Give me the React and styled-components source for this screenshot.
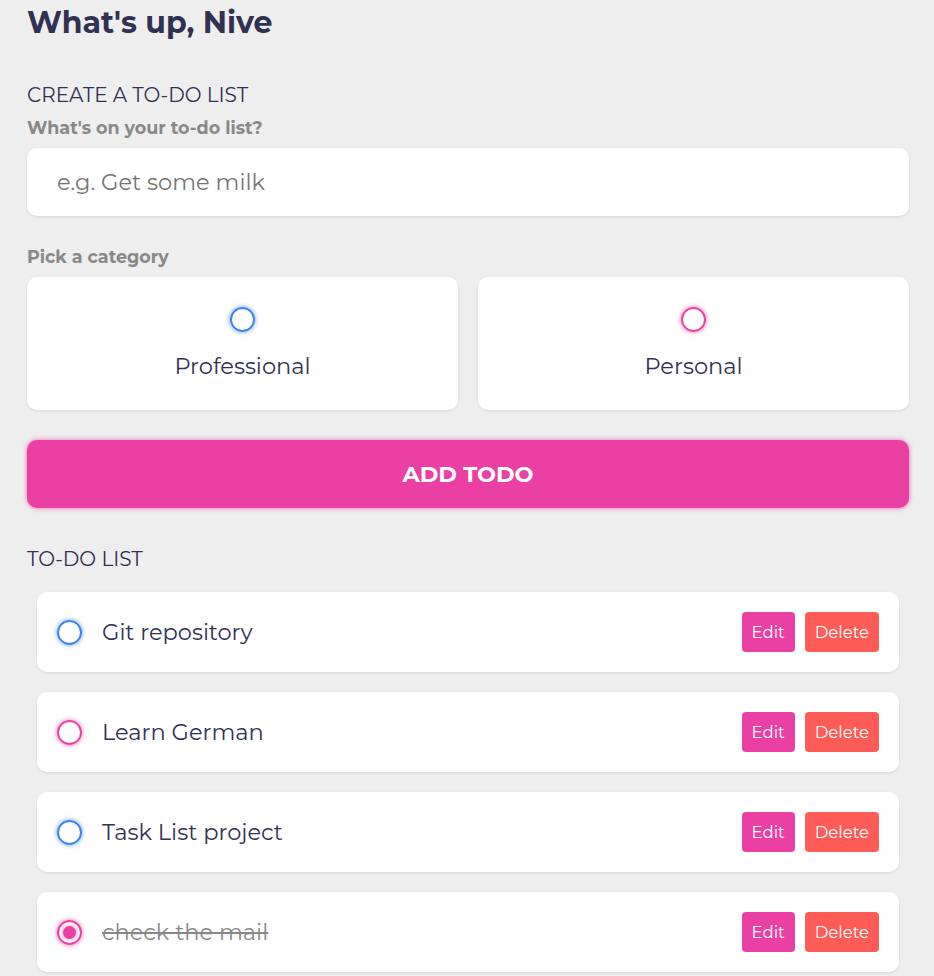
import React, {useState} from 'react';
import styled, {createGlobalStyle} from 'styled-components';

const GlobalStyle = createGlobalStyle`
  * {
    box-sizing: border-box;
    margin: 0;
    padding: 0;
  }

  body {
    background-color: #eeeeee;
    font-family: "Montserrat", "Inter", "DejaVu Sans", sans-serif;
    color: #313154;
  }
`

const StyledApp = styled.main`
  padding: 5px 25px 20px 27px;
`

const Greeting = styled.h2`
  font-size: 30px;
  font-weight: 700;
  line-height: 36px;
  color: #313154;
`

const Section = styled.section`
  margin-top: ${props => props.$top || 40}px;
`

const SectionTitle = styled.h3`
  font-size: 20px;
  font-weight: 400;
  line-height: 24px;
  color: #313154;
  margin-bottom: ${props => props.$gap || 10}px;
`

const Label = styled.h4`
  font-size: 17.5px;
  font-weight: 700;
  line-height: 21px;
  color: #888888;
  margin-bottom: 10px;
`

const TextInput = styled.input`
  display: block;
  width: 100%;
  height: 68px;
  padding: 0 30px;
  font-family: inherit;
  font-size: 22.5px;
  color: #313154;
  background-color: #ffffff;
  border: none;
  border-radius: 10px;
  box-shadow: 0 1px 3px rgba(0, 0, 0, 0.1);
  margin-bottom: 30px;
  outline: none;

  &::placeholder {
    color: #757575;
  }
`

const Options = styled.div`
  display: grid;
  grid-template-columns: repeat(2, 1fr);
  gap: 20px;
  margin-bottom: 30px;
`

const Option = styled.label`
  display: flex;
  flex-direction: column;
  align-items: center;
  justify-content: center;
  height: 133px;
  background-color: #ffffff;
  border-radius: 10px;
  box-shadow: 0 1px 3px rgba(0, 0, 0, 0.1);
  cursor: pointer;
`

const OptionText = styled.div`
  margin-top: 20px;
  font-size: 22.5px;
  color: #313154;
`

const Bubble = styled.span`
  display: flex;
  align-items: center;
  justify-content: center;
  flex-shrink: 0;
  width: 25px;
  height: 25px;
  border-radius: 999px;
  border: 2.5px solid ${props => props.$color};
  box-shadow: 0 0 5px ${props => props.$glow};

  &::after {
    content: '';
    display: ${props => props.$checked ? 'block' : 'none'};
    width: 13px;
    height: 13px;
    border-radius: 999px;
    background-color: ${props => props.$color};
    box-shadow: 0 0 5px ${props => props.$glow};
  }
`

const AddButton = styled.button`
  display: block;
  width: 100%;
  height: 68px;
  font-family: inherit;
  font-size: 22.5px;
  font-weight: 700;
  text-transform: uppercase;
  color: #ffffff;
  background-color: #ea40a4;
  border: none;
  border-radius: 10px;
  box-shadow: 0 0 5px rgba(234, 64, 164, 0.75);
  cursor: pointer;
`

const List = styled.div`
  margin: 0 10px;
  display: flex;
  flex-direction: column;
  gap: 20px;
`

const Item = styled.div`
  display: flex;
  align-items: center;
  height: 80px;
  padding: 0 20px;
  background-color: #ffffff;
  border-radius: 10px;
  box-shadow: 0 1px 3px rgba(0, 0, 0, 0.1);
`

const ItemText = styled.div`
  flex: 1;
  margin-left: 20px;
  font-size: 22.5px;
  color: ${props => props.$done ? '#888888' : '#313154'};
  text-decoration: ${props => props.$done ? 'line-through' : 'none'};
`

const Actions = styled.div`
  display: flex;
  align-items: center;
  gap: 10px;
`

const ActionButton = styled.button`
  height: 40px;
  padding: 0 10px;
  font-family: inherit;
  font-size: 16.5px;
  color: #ffffff;
  background-color: ${props => props.$danger ? '#ff5b57' : '#ea40a4'};
  border: none;
  border-radius: 4px;
  cursor: pointer;
`

const colors = {
    business: {color: '#3a82ee', glow: 'rgba(58, 130, 238, 0.75)'},
    personal: {color: '#ea40a4', glow: 'rgba(234, 64, 164, 0.75)'},
};

const todos = [
    {content: 'Git repository', category: 'business', done: false},
    {content: 'Learn German', category: 'personal', done: false},
    {content: 'Task List project', category: 'business', done: false},
    {content: 'check the mail', category: 'personal', done: true},
];

const App = () => {
    const [text, setText] = useState('');

    return (
        <StyledApp>
            <GlobalStyle/>
            <Greeting>What's up, Nive</Greeting>

            <Section $top={42}>
                <SectionTitle>CREATE A TO-DO LIST</SectionTitle>
                <Label>What's on your to-do list?</Label>
                <TextInput type={'text'} placeholder={'e.g. Get some milk'} value={text}
                           onChange={(event) => setText(event.target.value)}/>

                <Label>Pick a category</Label>
                <Options>
                    <Option>
                        <Bubble $color={colors.business.color} $glow={colors.business.glow}/>
                        <OptionText>Professional</OptionText>
                    </Option>
                    <Option>
                        <Bubble $color={colors.personal.color} $glow={colors.personal.glow}/>
                        <OptionText>Personal</OptionText>
                    </Option>
                </Options>

                <AddButton type={'button'}>Add todo</AddButton>
            </Section>

            <Section $top={39}>
                <SectionTitle $gap={21}>TO-DO LIST</SectionTitle>
                <List>
                    {todos.map(todo => (
                        <Item key={todo.content}>
                            <Bubble $color={colors[todo.category].color}
                                    $glow={colors[todo.category].glow}
                                    $checked={todo.done}/>
                            <ItemText $done={todo.done}>{todo.content}</ItemText>
                            <Actions>
                                <ActionButton type={'button'}>Edit</ActionButton>
                                <ActionButton type={'button'} $danger>Delete</ActionButton>
                            </Actions>
                        </Item>
                    ))}
                </List>
            </Section>
        </StyledApp>
    )
};

export default App;
